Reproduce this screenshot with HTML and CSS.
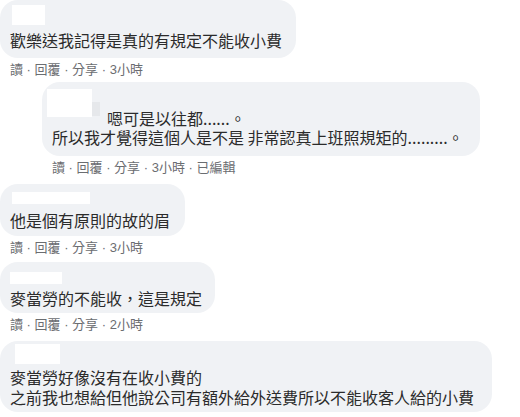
FILE: index.html
```html
<!DOCTYPE html>
<html lang="zh-Hant">
<head>
  <meta charset="UTF-8">
  <title>留言</title>
  <link rel="stylesheet" href="styles.css">
</head>
<body>

<div class="comments">
  <!-- comment 1 -->
  <div class="comment c1">
    <div class="bubble">
      <div class="name"></div>
      <p class="text">歡樂送我記得是真的有規定不能收小費</p>
    </div>
    <div class="actions">讀 · 回覆 · 分享 · 3小時</div>
  </div>

  <!-- reply -->
  <div class="comment reply">
    <div class="bubble">
      <div class="first-line">
        <span class="name-tag"></span>
        <span class="tag-edge"></span>
        <span class="text">嗯可是以往都......。</span>
      </div>
      <p class="text">所以我才覺得這個人是不是 非常認真上班照規矩的.........。</p>
    </div>
    <div class="actions">讀 · 回覆 · 分享 · 3小時 · 已編輯</div>
  </div>

  <div class="comment c3">
    <div class="bubble">
      <div class="name"></div>
      <p class="text">他是個有原則的故的眉</p>
    </div>
    <div class="actions">讀 · 回覆 · 分享 · 3小時</div>
  </div>

  <div class="comment c4">
    <div class="bubble">
      <div class="name"></div>
      <p class="text">麥當勞的不能收，這是規定</p>
    </div>
    <div class="actions">讀 · 回覆 · 分享 · 2小時</div>
  </div>

  <div class="comment c5">
    <div class="bubble">
      <div class="name"></div>
      <p class="text">麥當勞好像沒有在收小費的</p>
      <p class="text">之前我也想給但他說公司有額外給外送費所以不能收客人給的小費</p>
    </div>
  </div>
</div>

</body>
</html>
```

FILE: styles.css
```css
body {
  margin: 0;
  background: #fff;
  font-family: "Noto Sans CJK TC", "Noto Sans", sans-serif;
  color: #2b2b2b;
}

.comments {
  display: flex;
  flex-direction: column;
  align-items: flex-start;
}

.comment {
  display: flex;
  flex-direction: column;
  align-items: flex-start;
}

.bubble {
  background: #f0f2f5;
  border-radius: 18px;
  padding: 5px 14px 8px 10px;
}

.text {
  margin: 0;
  font-size: 16px;
  line-height: 20px;
  white-space: nowrap;
}

.name {
  background: #fff;
  height: 20px;
  width: 33px;
  margin: 0 0 5px 2px;
}

.actions {
  font-family: "Liberation Sans", "Noto Sans CJK TC", sans-serif;
  font-size: 13px;
  line-height: 16px;
  color: #6b6d71;
  margin: 4px 0 0 10px;
}

/* reply */
.reply {
  margin: 4px 0 0 42px;
}

.reply .bubble {
  padding: 7px 16px 9px 10px;
}

.reply .text {
  line-height: 19px;
}

.first-line {
  display: flex;
  align-items: flex-start;
}

.name-tag {
  background: #fff;
  width: 45px;
  height: 28px;
  margin-left: -5px;
}

.tag-edge {
  background: #e6e8eb;
  width: 8px;
  height: 14px;
  margin-top: 13px;
}

.first-line .text {
  margin: 20px 0 0 7px;
}

.reply .actions {
  margin-top: 4px;
}

/* others */
.c3 {
  margin-top: 8px;
}

.c3 .bubble {
  padding: 6px 15px 6px 10px;
}

.c3 .name {
  width: 78px;
  height: 12px;
  margin: 2px 0 6px 2px;
}

.c3 .actions,
.c4 .actions {
  margin-top: 4px;
}

.c4 {
  margin-top: 6px;
}

.c4 .bubble {
  padding: 6px 13px 5px 10px;
}

.c4 .name {
  width: 52px;
  height: 12px;
  margin: 4px 0 4px 0;
}

.c5 {
  margin-top: 8px;
}

.c5 .bubble {
  padding: 3px 18px 5px 10px;
}

.c5 .name {
  width: 45px;
  height: 20px;
  margin: 0 0 3px 5px;
}
```
